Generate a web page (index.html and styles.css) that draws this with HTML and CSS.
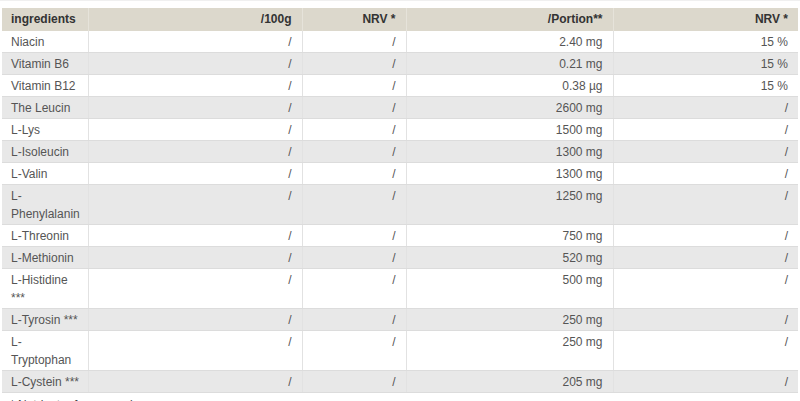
FILE: index.html
```html
<!DOCTYPE html>
<html>
<head>
<meta charset="utf-8">
<link rel="stylesheet" href="styles.css">
</head>
<body>
<div class="wrap">
<table class="nut">
<colgroup>
<col class="c1"><col class="c2"><col class="c3"><col class="c4"><col class="c5">
</colgroup>
<thead>
<tr><th class="l">ingredients</th><th>/100g</th><th>NRV *</th><th>/Portion**</th><th>NRV *</th></tr>
</thead>
<tbody>
<tr><td class="l">Niacin</td><td>/</td><td>/</td><td>2.40 mg</td><td>15 %</td></tr>
<tr><td class="l">Vitamin B6</td><td>/</td><td>/</td><td>0.21 mg</td><td>15 %</td></tr>
<tr><td class="l">Vitamin B12</td><td>/</td><td>/</td><td>0.38 µg</td><td>15 %</td></tr>
<tr><td class="l">The Leucin</td><td>/</td><td>/</td><td>2600 mg</td><td>/</td></tr>
<tr><td class="l">L-Lys</td><td>/</td><td>/</td><td>1500 mg</td><td>/</td></tr>
<tr><td class="l">L-Isoleucin</td><td>/</td><td>/</td><td>1300 mg</td><td>/</td></tr>
<tr><td class="l">L-Valin</td><td>/</td><td>/</td><td>1300 mg</td><td>/</td></tr>
<tr><td class="l">L-<br>Phenylalanin</td><td>/</td><td>/</td><td>1250 mg</td><td>/</td></tr>
<tr><td class="l">L-Threonin</td><td>/</td><td>/</td><td>750 mg</td><td>/</td></tr>
<tr><td class="l">L-Methionin</td><td>/</td><td>/</td><td>520 mg</td><td>/</td></tr>
<tr><td class="l">L-Histidine<br>***</td><td>/</td><td>/</td><td>500 mg</td><td>/</td></tr>
<tr><td class="l">L-Tyrosin&nbsp;***</td><td>/</td><td>/</td><td>250 mg</td><td>/</td></tr>
<tr><td class="l">L-<br>Tryptophan</td><td>/</td><td>/</td><td>250 mg</td><td>/</td></tr>
<tr><td class="l">L-Cystein&nbsp;***</td><td>/</td><td>/</td><td>205 mg</td><td>/</td></tr>
</tbody>
</table>
<p class="note">* Nutrient reference values</p>
</div>
</body>
</html>
```
FILE: styles.css
```css
html, body {
  margin: 0;
  padding: 0;
  background: #fff;
}
.wrap {
  padding: 7px 2px 0 2px;
  border-top: 1px solid #f0f0f0;
  font-family: "Liberation Sans", Arial, sans-serif;
  font-size: 12px;
  line-height: 18px;
  color: #555;
}
.nut {
  width: 796px;
  border-collapse: collapse;
  table-layout: fixed;
}
.c1 { width: 86px; }
.c2 { width: 214px; }
.c3 { width: 104px; }
.c4 { width: 207px; }
.c5 { width: 185px; }
.nut th, .nut td {
  padding: 2px 10px 1px 9px;
  text-align: right;
  vertical-align: top;
  border-left: 1px solid #e2e2e2;
  border-bottom: 1px solid #dcdcdc;
}
.nut th:first-child, .nut td:first-child {
  border-left: none;
  padding-right: 4px;
}
.nut th {
  padding-top: 2px;
  padding-bottom: 3px;
  background: #dcd8cc;
  color: #333;
  font-weight: bold;
  border-left-color: #e6e3da;
  border-bottom: none;
}
.nut .l { text-align: left; }
.nut tbody tr:nth-child(even) td { background: #e8e8e8; }
.note {
  margin: 3px 0 0 8px;
  color: #444;
}
```
